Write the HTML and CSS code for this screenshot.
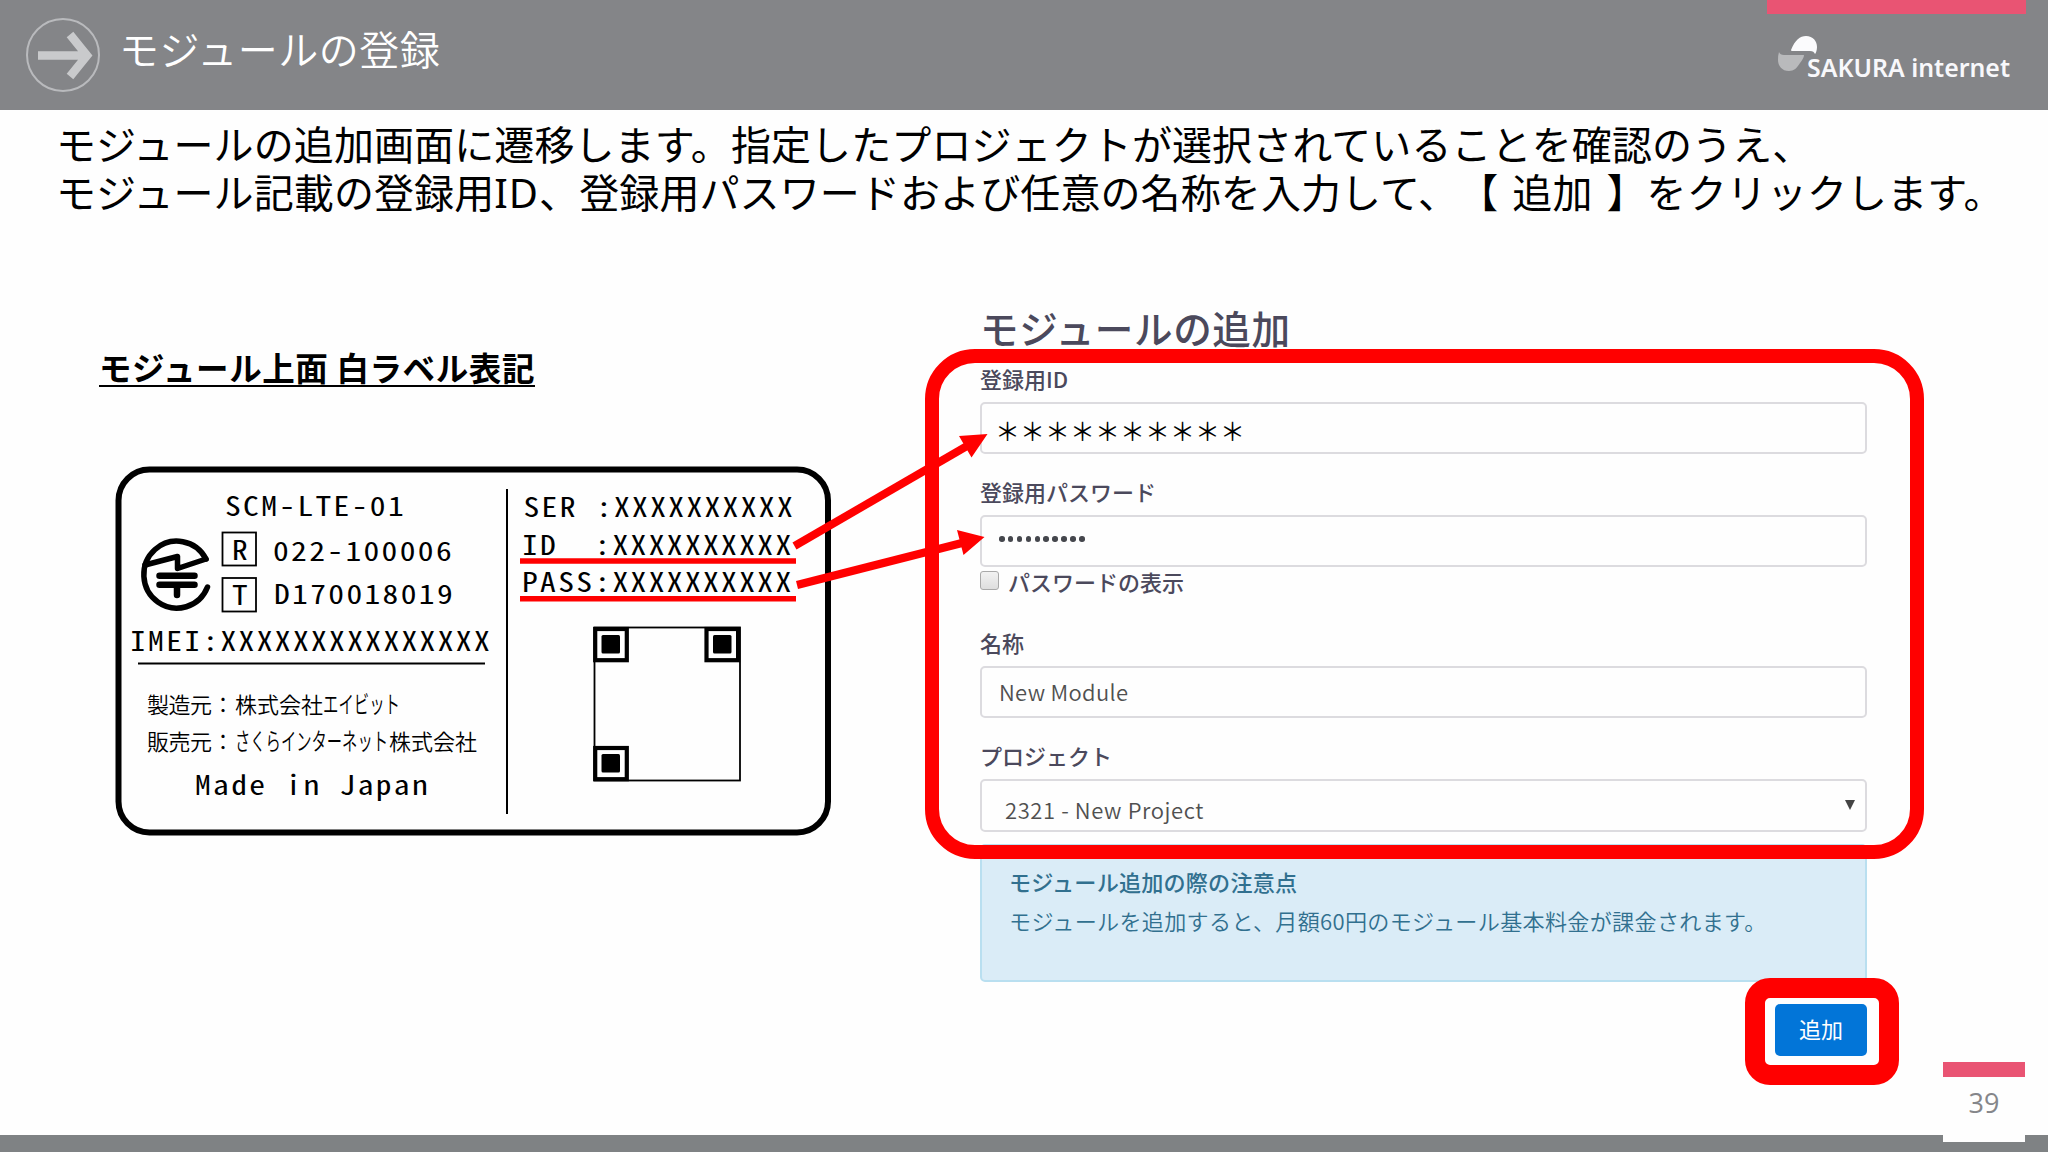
FILE: index.html
```html
<!DOCTYPE html>
<html lang="ja">
<head>
    <meta charset="UTF-8">
    <meta name="viewport" content="width=device-width, initial-scale=1.0">
    <title>モジュールの登録</title>
    <link rel="stylesheet" href="styles.css">
</head>
<body>
    <div class="slide">
        <header class="header">
            <svg class="header-icon" width="76" height="76" viewBox="0 0 76 76">
                <circle cx="38" cy="38" r="36" fill="none" stroke="#b9babd" stroke-width="2"/>
                <path d="M13 38.500H60M45 17.500L62 38.500L45 59.500" fill="none" stroke="#c9cacc" stroke-width="8.500"/>
            </svg>
            <h1>モジュールの登録</h1>
            <div class="brand">
                <div class="brand-bar"></div>
                <svg class="logo" width="240" height="50" viewBox="0 0 240 50">
                    <path d="M15 15C19 5 24 1 30 1C37 1 41 6 41 12C41 15 40 18 39 19C38 17 37 16 34 16H16Q15 16 15 15Z" fill="#fbfbfd"/>
                    <path d="M3 17Q4 20 8 20H28Q28 23 24 28C21 33 18 36 13 36C6 36 2 31 2 25Q2 20 3 17Z" fill="#b9babc"/>
                    <text class="logo-text" x="31" y="42" textLength="203" lengthAdjust="spacingAndGlyphs">SAKURA internet</text>
                </svg>
            </div>
        </header>

        <p class="lead">モジュールの追加画面に遷移します。指定したプロジェクトが選択されていることを確認のうえ、<br>モジュール記載の登録用<span class="latin">ID</span>、登録用パスワードおよび任意の名称を入力して、【<span class="gap"> </span>追加<span class="gap"> </span>】をクリックします。</p>

        <main class="content">
            <section class="label-side">
                <h2>モジュール上面 白ラベル表記</h2>
                <!-- printed label on top of the module -->
                <svg class="module-label" width="716" height="370" viewBox="115 466 716 370">
                    <rect x="118.500" y="469.500" width="709.500" height="363" rx="31" fill="none" stroke="#000" stroke-width="6"/>
                    <path d="M507 489V814" stroke="#000" stroke-width="2"/>
                    <path d="M138 663.500H485" stroke="#000" stroke-width="2"/>

                    <g class="mono">
                        <text x="225" y="516" textLength="181" lengthAdjust="spacingAndGlyphs">SCM-LTE-01</text>
                        <text x="232" y="560" textLength="18" lengthAdjust="spacingAndGlyphs">R</text>
                        <text x="273" y="561" textLength="181" lengthAdjust="spacingAndGlyphs">022-100006</text>
                        <text x="232" y="605" textLength="18" lengthAdjust="spacingAndGlyphs">T</text>
                        <text x="274" y="604" textLength="181" lengthAdjust="spacingAndGlyphs">D170018019</text>
                        <text x="130" y="651" textLength="362" lengthAdjust="spacingAndGlyphs">IMEI:XXXXXXXXXXXXXXX</text>
                        <text x="195" y="795" textLength="235" lengthAdjust="spacingAndGlyphs">Made in Japan</text>
                        <text x="523.500" y="517" textLength="271.500" lengthAdjust="spacingAndGlyphs">SER :XXXXXXXXXX</text>
                        <text x="522" y="555" textLength="271.500" lengthAdjust="spacingAndGlyphs">ID  :XXXXXXXXXX</text>
                        <text x="522" y="592" textLength="271.500" lengthAdjust="spacingAndGlyphs">PASS:XXXXXXXXXX</text>
                    </g>
                    <rect x="222.500" y="532.500" width="33.500" height="33" fill="none" stroke="#000" stroke-width="1.800"/>
                    <rect x="222.500" y="578" width="33.500" height="33.500" fill="none" stroke="#000" stroke-width="1.800"/>

                    <!-- technical conformity mark -->
                    <g fill="none" stroke="#000" stroke-width="5.500" stroke-linecap="round" stroke-linejoin="round">
                        <path d="M206 559A33 33.500 0 1 0 207.500 587"/>
                        <path d="M145 565L177.500 556.500V568.500L206 559"/>
                        <path d="M159.500 575.700H194.500M159.500 584.800H194.500M177 585V595" stroke-width="6.500"/>
                    </g>

                    <g class="maker">
                        <text x="147" y="713" textLength="65">製造元</text>
                        <text x="212" y="713">：</text>
                        <text x="235" y="713" textLength="88">株式会社</text>
                        <text class="kana" x="323" y="713" textLength="77" lengthAdjust="spacingAndGlyphs">エイビット</text>
                        <text x="147" y="750" textLength="65">販売元</text>
                        <text x="212" y="750">：</text>
                        <text class="kana" x="235" y="750" textLength="153" lengthAdjust="spacingAndGlyphs">さくらインターネット</text>
                        <text x="389" y="750" textLength="88">株式会社</text>
                    </g>

                    <path d="M520 561H796M520 598.800H796" stroke="#f00" stroke-width="5.500"/>

                    <rect x="594.500" y="627.500" width="145.500" height="153" fill="none" stroke="#000" stroke-width="1.800"/>
                    <g fill="none" stroke="#000" stroke-width="4.200">
                        <rect x="595.200" y="629" width="31.600" height="31.200"/>
                        <rect x="706.500" y="629" width="31.600" height="31.200"/>
                        <rect x="595.200" y="748" width="31.600" height="31.200"/>
                    </g>
                    <rect x="601.500" y="635" width="18.500" height="18.500" rx="1.500"/>
                    <rect x="713" y="635" width="18.500" height="18.500" rx="1.500"/>
                    <rect x="601.500" y="754" width="18.500" height="18.500" rx="1.500"/>
                </svg>
            </section>

            <section class="form-side">
                <h2>モジュールの追加</h2>
                <form>
                    <div class="form-group">
                        <label>登録用ID</label>
                        <div class="field stars">＊＊＊＊＊＊＊＊＊＊</div>
                    </div>
                    <div class="form-group">
                        <label>登録用パスワード</label>
                        <div class="field dots">
                            <i></i><i></i><i></i><i></i><i></i><i></i><i></i><i></i><i></i><i></i>
                        </div>
                    </div>
                    <div class="check-row">
                        <span class="checkbox"></span>
                        <label>パスワードの表示</label>
                    </div>
                    <div class="form-group">
                        <label>名称</label>
                        <div class="field name">New Module</div>
                    </div>
                    <div class="form-group">
                        <label>プロジェクト</label>
                        <div class="field select">
                            <span>2321 - New Project</span>
                            <svg width="10" height="10" viewBox="0 0 10 10"><path d="M0 0H10L5 10Z" fill="#444"/></svg>
                        </div>
                    </div>
                    <div class="alert">
                        <strong>モジュール追加の際の注意点</strong>
                        <p>モジュールを追加すると、月額60円のモジュール基本料金が課金されます。</p>
                    </div>
                    <div class="actions">
                        <button type="button">追加</button>
                    </div>
                </form>
                <div class="mark mark-form"></div>
                <div class="mark mark-button"></div>
            </section>
        </main>

        <footer class="footer">
            <div class="page-number">39</div>
        </footer>

        <svg class="arrows" width="2048" height="1152" viewBox="0 0 2048 1152">
            <g stroke="#f00" stroke-width="8">
                <path d="M794.500 546L967 446"/>
                <path d="M797 585L962 543"/>
            </g>
            <path d="M987.500 434L959 436L971.500 457.500ZM984.500 537L957 530L963.500 555Z" fill="#f00"/>
        </svg>
    </div>
</body>
</html>
```

FILE: styles.css
```css
* {
    box-sizing: border-box;
}
body {
    margin: 0;
    font-family: "Noto Sans CJK JP", sans-serif;
    background: #fefefe;
}
h1, h2, p {
    margin: 0;
}
.slide {
    position: relative;
    display: flex;
    flex-direction: column;
    width: 2048px;
    height: 1152px;
    overflow: hidden;
}
.header {
    display: flex;
    align-items: flex-start;
    height: 110px;
    padding: 0 22px 0 25px;
    background: #848588;
}
.header-icon {
    margin-top: 17px;
}
.header h1 {
    margin: 18px 0 0 18px;
    font-size: 40px;
    font-weight: 350;
    line-height: 60px;
    letter-spacing: 0.5px;
    color: #fff;
}
.brand {
    display: flex;
    flex-direction: column;
    width: 259px;
    margin-left: auto;
}
.brand-bar {
    height: 14px;
    background: #e95473;
}
.logo {
    margin: 21px 0 0 9px;
}
.logo-text {
    font-family: "Noto Sans", "Open Sans", sans-serif;
    font-size: 25px;
    font-weight: 600;
    fill: #f8f8fb;
}
.lead {
    height: 192px;
    padding: 9px 0 0 56px;
    font-size: 40px;
    line-height: 48px;
    letter-spacing: 0.1px;
    white-space: nowrap;
    text-spacing-trim: space-all;
    color: #000;
}
.lead .latin {
    font-family: "Noto Sans", sans-serif;
    letter-spacing: 1px;
}
.lead .gap {
    display: inline-block;
    width: 14px;
}
.content {
    display: grid;
    grid-template-columns: 980px 887px;
    flex: 1;
}
.label-side h2 {
    display: inline-block;
    height: 39px;
    margin: 46px 0 79px 99px;
    border-bottom: 2px solid #000;
    font-size: 32.5px;
    font-weight: 700;
    line-height: 38px;
    letter-spacing: 0.6px;
    white-space: nowrap;
}
.module-label {
    display: block;
    margin-left: 115px;
}
.mono text {
    font-size: 27px;
    letter-spacing: 2px;
    font-feature-settings: "hwid";
    white-space: pre;
}
.maker text {
    font-size: 22px;
    font-weight: 350;
}
.maker .kana {
    font-size: 24px;
}
.form-side {
    position: relative;
    padding-top: 5px;
    color: #4b495c;
}
.form-side h2 {
    margin-bottom: 15px;
    font-size: 38.6px;
    font-weight: 500;
    line-height: 40px;
    letter-spacing: 0.6px;
}
.form-group {
    display: flex;
    flex-direction: column;
    gap: 8px;
    margin-bottom: 21px;
}
label {
    padding-bottom: 2px;
    font-size: 22px;
    font-weight: 500;
    line-height: 32px;
}
.form-group label {
    height: 32px;
}
.field {
    display: flex;
    align-items: center;
    height: 52px;
    padding: 0 17px 3px;
    border: 2px solid #dcdbdf;
    border-radius: 5px;
    background: #fefefe;
    font-size: 22px;
    font-weight: 350;
    color: #505050;
}
.stars {
    padding: 3px 0 0 13px;
    font-size: 25px;
    font-weight: 400;
    color: #000;
}
.dots {
    gap: 3.4px;
    padding-bottom: 4px;
}
.dots i {
    width: 5.5px;
    height: 5.5px;
    border-radius: 50%;
    background: #45474d;
}
.check-row {
    display: flex;
    gap: 9px;
    height: 38px;
    margin: -21px 0 21px;
}
.check-row label {
    margin-top: -2px;
}
.checkbox {
    width: 19px;
    height: 19px;
    margin-top: 4px;
    border: 1.5px solid #a9a9a9;
    border-radius: 3px;
    background: linear-gradient(#f2f2f2, #dedede);
}
.name {
    letter-spacing: 0.3px;
}
.select {
    justify-content: space-between;
    height: 53px;
    padding: 7px 10px 0 23px;
    letter-spacing: 0.6px;
}
.select svg {
    margin-top: -9px;
}
.alert {
    height: 138px;
    margin-top: -9px;
    padding: 15px 27px;
    border: 2px solid #b9dff0;
    border-radius: 5px;
    background: #daecf7;
    font-size: 22.1px;
    line-height: 40px;
    letter-spacing: 0.2px;
    white-space: nowrap;
    color: #31708f;
}
.alert strong {
    display: block;
    font-weight: 500;
}
.alert p {
    font-weight: 350;
    letter-spacing: 0.3px;
    line-height: 38px;
    text-spacing-trim: space-all;
}
.actions {
    display: flex;
    justify-content: flex-end;
    margin-top: 22px;
}
button {
    width: 92px;
    height: 52px;
    padding-bottom: 6px;
    border: none;
    border-radius: 5px;
    background: #0275d8;
    font-family: inherit;
    font-size: 22px;
    color: #fff;
}
/* red highlight frames over the form */
.mark {
    position: absolute;
    border: 14px solid #f00;
    border-radius: 50px;
}
.mark-form {
    top: 47px;
    left: -55px;
    width: 999px;
    height: 510px;
}
.mark-button {
    top: 676px;
    left: 765px;
    width: 154px;
    height: 107px;
    border-width: 20.5px;
    border-radius: 25px;
}
.footer {
    position: absolute;
    bottom: 0;
    left: 0;
    width: 100%;
    height: 17px;
    background: #7f8284;
}
.page-number {
    position: absolute;
    right: 23px;
    bottom: 10px;
    width: 82px;
    height: 80px;
    padding-top: 6px;
    border-top: 15px solid #e95473;
    background: #fefefe;
    font-family: "Open Sans", sans-serif;
    font-size: 27px;
    font-weight: 400;
    line-height: 40px;
    text-align: center;
    color: #85868a;
}
.arrows {
    position: absolute;
    top: 0;
    left: 0;
}
```
